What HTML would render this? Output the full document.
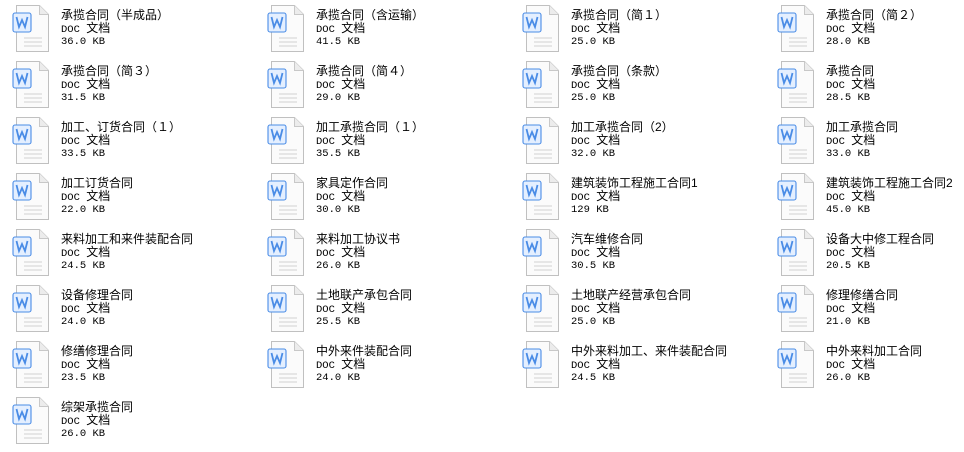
<html><head><style>
body{margin:0;background:#fff;width:964px;height:452px;overflow:hidden;font-family:"Liberation Mono","Noto Sans CJK SC",monospace;font-size:12px;color:#000}
.it{position:absolute;width:255px;height:56px}
.ic{position:absolute;left:12px;top:4px}
.t{position:absolute;left:61px;top:8px;white-space:nowrap}
.t>div{height:13px;line-height:13px;overflow:visible}
.t div:first-child{font-family:"Liberation Sans","Noto Sans CJK SC",sans-serif;position:relative;top:1px}
.m{font-size:10.5px;line-height:13px}
.t>div.k{position:relative;top:2px}
.c{font-size:12px;line-height:13px;font-family:"Noto Sans CJK SC",sans-serif}
</style></head><body>
<svg width="0" height="0" style="position:absolute"><defs><g id="ic">
<path d="M4.5 1.5h23l9 9v37h-32z" fill="#fbfbfb" stroke="#c0c0c0"/>
<path d="M27.5 1.5v9h9" fill="#ececec" stroke="#c8c8c8"/>
<rect x="1" y="9" width="18" height="19" rx="2" fill="#e4efff" stroke="#4a8ce6" stroke-width="1.1"/>
<path d="M4.5 13l2.5 10 3-7 3 7 2.5-10" fill="none" stroke="#4a8ce6" stroke-width="1.8"/>
<path d="M12 34h18M12 38h18M12 42h18" stroke="#d0d0d0"/>
</g></defs></svg>
<div id="c"></div>
<script>
var d=[["承揽合同（半成品）","36.0"],["承揽合同（含运输）","41.5"],["承揽合同（简１）","25.0"],["承揽合同（简２）","28.0"],
["承揽合同（简３）","31.5"],["承揽合同（简４）","29.0"],["承揽合同（条款）","25.0"],["承揽合同","28.5"],
["加工、订货合同（１）","33.5"],["加工承揽合同（１）","35.5"],["加工承揽合同（2）","32.0"],["加工承揽合同","33.0"],
["加工订货合同","22.0"],["家具定作合同","30.0"],["建筑装饰工程施工合同1","129"],["建筑装饰工程施工合同2","45.0"],
["来料加工和来件装配合同","24.5"],["来料加工协议书","26.0"],["汽车维修合同","30.5"],["设备大中修工程合同","20.5"],
["设备修理合同","24.0"],["土地联产承包合同","25.5"],["土地联产经营承包合同","25.0"],["修理修缮合同","21.0"],
["修缮修理合同","23.5"],["中外来件装配合同","24.0"],["中外来料加工、来件装配合同","24.5"],["中外来料加工合同","26.0"],
["综架承揽合同","26.0"]];
var h="";d.forEach(function(e,i){var x=(i%4)*255,y=Math.floor(i/4)*56;
h+='<div class="it" style="left:'+x+'px;top:'+y+'px"><svg class="ic" width="40" height="50"><use href="#ic"/></svg><div class="t"><div>'+e[0]+'</div><div><span class="m">DOC </span><span class="c">文档</span></div><div class="m k">'+e[1]+' KB</div></div></div>';});
document.getElementById("c").innerHTML=h;
</script></body></html>
